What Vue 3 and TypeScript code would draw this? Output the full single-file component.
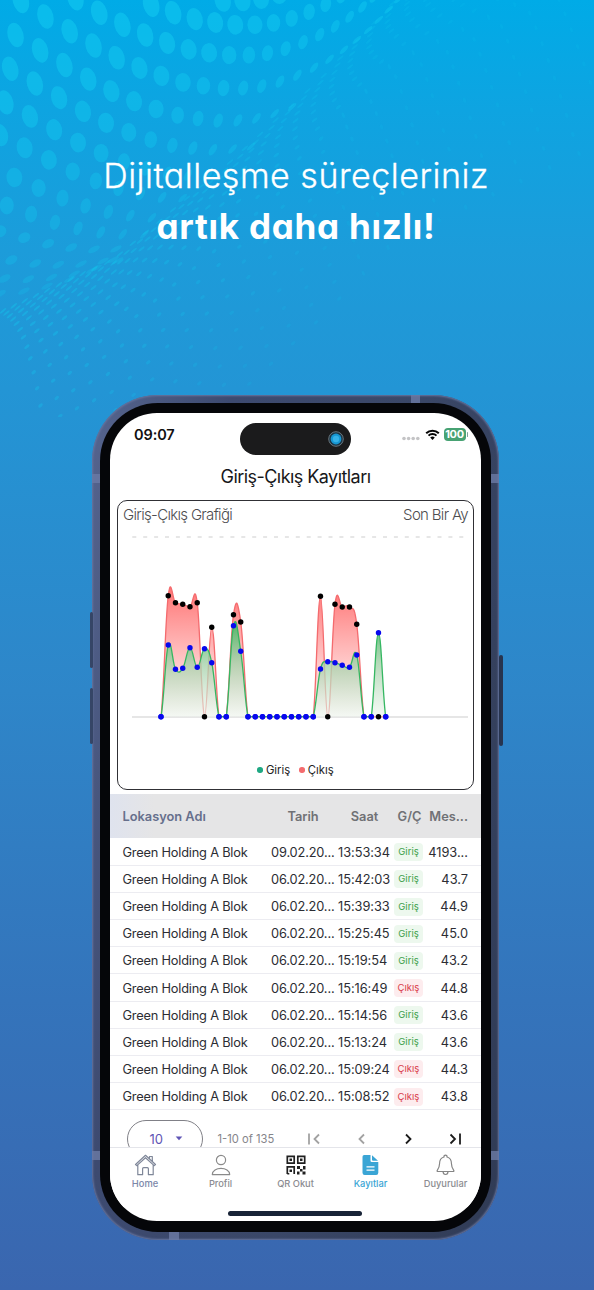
<script setup lang="ts">
interface Dot { x: number; y: number; rx: number; ry: number; a: number; o: number }
interface Row { date: string; time: string; type: 'Giriş' | 'Çıkış'; value: string }

const foldPoints: [number, number][] = [[-60, 845], [0, 820], [300, 680], [600, 430], [850, 200], [1040, 0], [1568, -250], [1700, -300]]
function foldY(x: number): number {
  for (let i = 1; i < foldPoints.length; i++) {
    const [x0, y0] = foldPoints[i - 1]
    const [x1, y1] = foldPoints[i]
    if (x <= x1) return y0 + ((y1 - y0) * (x - x0)) / (x1 - x0)
  }
  return -300
}

const stepX = [65, 64, 63, 61, 60, 58, 57, 54, 53, 52, 49, 48, 46, 44, 41, 38, 34, 30, 28, 26, 26, 26]
const stepY = [41, 39, 38, 32, 27, 21, 17, 9, 6, 0, -5, -12, -17, -20, -22, -25, -26, -26, -27, -27, -27, -27]
const starts: [number, number, number, number][] = [
  [-3, 588, 2, 9], [-2, 399, 12, 5], [-1, 199, -5, 2], [0, 55, 2, 0], [1, 41, 92, 0], [2, 27, 181, 0], [3, 14, 270, 0],
  [4, 0, 356, 0], [5, 38, 468, 1], [6, 18, 542, 1], [7, 0, 610, 1], [8, 30, 686, 2], [9, 12, 735, 2], [10, 0, 775, 2],
]
const dots: Dot[] = []
for (const [row, sx, sy, col] of starts) {
  let x = sx
  let y = sy
  const bend = row > 0 ? 0.45 * row * row : 0
  for (let c = col; c < 22; c++) {
    const gap = foldY(x) - y
    if (gap < -20) break
    const t = Math.max(0, Math.min(1, gap / 560))
    const flat = row >= 7
    const ry = flat ? 17 : 15 + 18 * t
    const rx = Math.max(3, Math.min(21, 5 + gap * 0.05))
    dots.push({ x, y, rx, ry, a: flat ? 62 : -15 + 62 * (1 - t) ** 2.2, o: Math.max(0.2, 0.42 + 0.14 * t - y / 3800) })
    x += stepX[c]
    y += Math.max(-29, stepY[c] - bend)
  }
}
const offsets = [4, 14, 25, 38, 54, 74, 98, 128, 163, 204, 250, 300, 352, 406, 462, 520, 578, 636]
offsets.forEach((off, k) => {
  for (let x = 8 + k * 9; x < 1568;) {
    const y = foldY(x) + off
    const near = Math.max(0, 1 - off / 200)
    if (y > -5 && y < 1100) {
      dots.push({ x, y, rx: 2.6 + (1 - near) * 1.6, ry: 7 + near * 4, a: x > 900 && near < 0.3 ? -20 : 50, o: Math.max(0.13, 0.38 - x / 5200 - off / 4500) })
    }
    x += (40 + x * 0.026) * (1 - near * 0.3)
  }
})

const base = 216.7
const x0 = 43
const pitch = 7.25
function series(values: Record<number, number>): number[] {
  return Array.from({ length: 32 }, (_, i) => (values[i] === undefined ? base : values[i] - 500))
}
const giris = series({ 1: 645, 2: 669.3, 3: 668.3, 4: 647.7, 5: 667.3, 6: 648.7, 7: 662.7, 10: 625.7, 11: 651.3, 22: 669, 23: 661.7, 24: 662.7, 25: 665.3, 26: 667.3, 27: 655, 30: 632.7 })
const cikis = series({ 1: 595.7, 2: 602.7, 3: 604.3, 4: 606.7, 5: 602.7, 7: 627.3, 10: 614.7, 11: 622, 22: 596.3, 24: 604.3, 25: 607, 26: 607, 27: 624.3 })
const px = (i: number): number => x0 + i * pitch
function curve(v: number[]): string {
  const at = (i: number): number => v[Math.max(0, Math.min(v.length - 1, i))]
  let d = `M${px(0)} ${v[0]}`
  for (let i = 0; i < v.length - 1; i++) {
    const c1 = Math.min(base, at(i) + (at(i + 1) - at(i - 1)) * 0.2)
    const c2 = Math.min(base, at(i + 1) - (at(i + 2) - at(i)) * 0.2)
    d += ` C${px(i) + 2.9} ${c1} ${px(i + 1) - 2.9} ${c2} ${px(i + 1)} ${at(i + 1)}`
  }
  return d
}
const girisPath = curve(giris)
const cikisPath = curve(cikis)

const raw: [string, string, string][] = [
  ['13:53:34', 'G', '4193...'], ['15:42:03', 'G', '43.7'], ['15:39:33', 'G', '44.9'], ['15:25:45', 'G', '45.0'], ['15:19:54', 'G', '43.2'],
  ['15:16:49', 'C', '44.8'], ['15:14:56', 'G', '43.6'], ['15:13:24', 'G', '43.6'], ['15:09:24', 'C', '44.3'], ['15:08:52', 'C', '43.8'],
]
const rows: Row[] = raw.map(([time, t, value], i) => ({ date: i === 0 ? '09.02.20...' : '06.02.20...', time, type: t === 'G' ? 'Giriş' : 'Çıkış', value }))
</script>

<template>
  <main class="poster">
    <svg class="dots" viewBox="0 0 1568 1100" width="594" height="417" aria-hidden="true">
      <ellipse v-for="(d, i) in dots" :key="i" cx="0" cy="0" :rx="d.rx" :ry="d.ry" :opacity="d.o" :transform="`translate(${d.x} ${d.y}) rotate(${d.a})`" fill="#13cbf0" />
    </svg>
    <header class="headline">
      <p class="line light">Dijitalleşme süreçleriniz</p>
      <p class="line bold">artık daha hızlı!</p>
    </header>

    <section class="phone">
      <i class="key k1"></i><i class="key k2"></i><i class="key k3"></i>
      <i class="band b1"></i><i class="band b2"></i><i class="band b3"></i><i class="band b4"></i><i class="band b5"></i><i class="band b6"></i>
      <div class="bezel">
        <div class="screen">
          <div class="island"><svg width="16" height="16" viewBox="0 0 16 16"><circle cx="8" cy="8" r="7.3" fill="#1b3444" stroke="#7c8990" stroke-width=".8" /><circle cx="8" cy="8" r="5.4" fill="#1696d2" /><circle cx="8" cy="8" r="3.2" fill="#36b2e8" /></svg></div>
          <div class="status">
            <span class="clock">09:07</span>
            <span class="signs">
              <svg width="18" height="5" viewBox="0 0 18 5"><g fill="#c4c4c6"><circle cx="2" cy="2.5" r="1.8" /><circle cx="6.6" cy="2.5" r="1.8" /><circle cx="11.2" cy="2.5" r="1.8" /><circle cx="15.8" cy="2.5" r="1.8" /></g></svg>
              <svg class="wifi" width="15" height="11" viewBox="0 0 15 11"><path d="M1.2 4.2a9 9 0 0 1 12.6 0M3.5 6.6a5.8 5.8 0 0 1 8 0" fill="none" stroke="#050505" stroke-width="2" /><path d="M5.2 8.6a3.4 3.4 0 0 1 4.6 0L7.5 11z" fill="#050505" /></svg>
              <span class="battery">100</span><i class="tip"></i>
            </span>
          </div>
          <h1 class="title">Giriş-Çıkış Kayıtları</h1>

          <div class="card">
            <div class="cardhead"><span>Giriş-Çıkış Grafiği</span><span>Son Bir Ay</span></div>
            <svg class="chart" width="354" height="240" viewBox="0 22 354 240">
              <defs>
                <linearGradient id="red" x1="0" y1="0" x2="0" y2="1"><stop offset="0" stop-color="#ff6c6c" stop-opacity=".95" /><stop offset="1" stop-color="#ff8080" stop-opacity=".02" /></linearGradient>
                <linearGradient id="green" x1="0" y1="0" x2="0" y2="1"><stop offset="0" stop-color="#48b765" stop-opacity=".95" /><stop offset=".45" stop-color="#a6d2ab" stop-opacity=".8" /><stop offset="1" stop-color="#edf5ed" stop-opacity=".6" /></linearGradient>
              </defs>
              <path d="M14.3 37H346" stroke="#dedede" stroke-width="1.5" stroke-dasharray="4 6.9" />
              <path d="M14 217H350" stroke="#dedede" stroke-width="1.3" />
              <path :d="cikisPath + 'Z'" fill="url(#red)" /><path :d="cikisPath" fill="none" stroke="#f46b6e" stroke-width="1.3" />
              <path :d="girisPath + 'Z'" fill="url(#green)" /><path :d="girisPath" fill="none" stroke="#35b762" stroke-width="1.3" />
              <circle v-for="(y, i) in cikis" :key="'c' + i" :cx="px(i)" :cy="y" r="2.7" :fill="y === base && giris[i] === base ? '#0808ee' : '#000'" />
              <circle v-for="(y, i) in giris" :key="'g' + i" :cx="px(i)" :cy="y" r="2.7" fill="#0808ee" />
            </svg>
            <div class="legend"><i class="g"></i><span>Giriş</span><i class="r"></i><span>Çıkış</span></div>
          </div>

          <div class="grid head"><span>Lokasyon Adı</span><span class="c">Tarih</span><span class="c">Saat</span><span class="c gc">G/Ç</span><span class="e">Mes...</span></div>
          <div class="list">
            <div v-for="r in rows" :key="r.time" class="grid row">
              <span class="name">Green Holding A Blok</span><span class="date">{{ r.date }}</span><span class="time">{{ r.time }}</span>
              <span class="badge" :class="{ out: r.type === 'Çıkış' }">{{ r.type }}</span><span class="e">{{ r.value }}</span>
            </div>
          </div>

          <div class="pager">
            <div class="size"><span>10</span><svg width="8" height="5" viewBox="0 0 8 5"><path d="M.7.6h6.6L4 4.2z" fill="#5f55b5" /></svg></div>
            <span class="range">1-10 of 135</span>
            <svg class="arrows" width="158" height="14" viewBox="0 0 158 14" fill="none" stroke-width="1.8"><path d="M2 1.5v11M12 2.5L7.5 7l4.500 4.500M57 2.500L52.500 7l4.500 4.500" stroke="#a2a2a2" /><path d="M99 2.500l4.500 4.500-4.500 4.500M143.500 2.500L148 7l-4.500 4.500M153 1.500v11" stroke="#1c1c1c" /></svg>
          </div>

          <nav class="tabs">
            <div class="tab home"><svg width="23" height="22" viewBox="0 0 23 22" fill="none" stroke="#7f8799" stroke-width="1.2" stroke-linejoin="round" stroke-linecap="round"><path d="M1.500 10.500L11.500 1.300l10 9.200-1.300 1.100-8.700-7.900-8.700 7.900zM3.800 11v9.700h4.800v-6q0-1 1-1h3.800q1 0 1 1v6h4.800V11M15.500 4.700V2.500h2.800v4.800" /></svg><span>Home</span></div>
            <div class="tab"><svg width="20" height="22" viewBox="0 0 20 22" fill="none" stroke="#8a8a8a" stroke-width="1.200"><circle cx="10" cy="6" r="4.600" /><path d="M1.300 20.600c0-8.300 17.400-8.300 17.400 0z" stroke-linejoin="round" /></svg><span>Profil</span></div>
            <div class="tab qr"><svg width="20" height="20" viewBox="0 0 20 20"><g fill="none" stroke="#202020" stroke-width="1.700"><path d="M1.300 1.300h6.900v6.900H1.300zM11.800 1.300h6.900v6.900h-6.900zM8.200 19v-7.200H1.300V19" /></g><path fill="#202020" d="M3.500 3.500h2.500V6H3.500zM14 3.500h2.500V6H14zM3.500 14.500H6V17H3.500zM1.300 18h2v1.500h-2zM11 11h3v3h-3zM14 14h2.500v2.500H14zM17 11h2.500v3.500H17zM11 16.500h2.500v3H11zM16.500 16.500h3v3h-3z" /></svg><span>QR Okut</span></div>
            <div class="tab active"><svg width="17" height="21" viewBox="0 0 17 21"><path d="M2.200.5h6.300v5.800q0 1.300 1.300 1.300h6.500v10.700q0 2.200-2.200 2.200H2.700Q.5 20.500.5 18.300V2.200Q.5.500 2.200.500zM10 .8l6 5.400h-5q-1 0-1-1z" fill="#3aa5d5" /><path d="M4.500 12.300h8M4.500 15.700h8" stroke="#fff" stroke-width="1.200" /></svg><span>Kayıtlar</span></div>
            <div class="tab"><svg width="19" height="22" viewBox="0 0 19 22" fill="none" stroke="#858585" stroke-width="1.200" stroke-linejoin="round"><path d="M8 3V2q1.500-1.600 3 0v1c3.600.9 4.500 3.700 4.500 7 0 3.300 1 4.600 2.200 6.300.5.700.2 1.200-.6 1.200H1.900c-.8 0-1.100-.5-.6-1.200C2.500 14.600 3.500 13.300 3.500 10c0-3.300.9-6.100 4.500-7zM7 17.500c.2 4 5 4 5 0" /></svg><span>Duyurular</span></div>
          </nav>
          <i class="homebar"></i>
        </div>
      </div>
    </section>
  </main>
</template>

<style>
body { margin: 0; }
</style>

<style scoped>
* { box-sizing: border-box; }
.poster { position: relative; width: 594px; height: 1290px; overflow: hidden; font-family: Inter, "Liberation Sans", sans-serif; background: linear-gradient(#00abe7 0, #0ea4e1 110px, #1c9cda 250px, #2395d5 390px, #2e86c9 690px, #3474bb 1000px, #3a66af 1290px); }
.dots { position: absolute; left: 0; top: 0; }
.headline { position: absolute; left: 0; right: 2px; top: 150px; text-align: center; color: #fff; }
.line { margin: 0; height: 51px; line-height: 51px; white-space: nowrap; font-feature-settings: "cv11"; }
.light { font-size: 34px; font-weight: 300; letter-spacing: .5px; -webkit-text-stroke: .3px #fff; }
.bold { font-size: 35px; font-weight: 700; letter-spacing: .75px; }
.phone { position: absolute; left: 92px; top: 395px; width: 407px; height: 845px; padding: 8px 8px; border-radius: 66px; background: linear-gradient(100deg, #56658f 0, #3d4a70 25%, #3a4767 60%, #303b55 100%); box-shadow: inset 0 0 2px 1px #6675a0; }
.bezel { height: 829px; padding: 10px 10px 11px 10px; border-radius: 58px; background: #050609; }
.screen { position: relative; height: 808px; width: 371px; border-radius: 47px; background: #fff; overflow: hidden; display: flex; flex-direction: column; color: #2c2d33; }
.key { position: absolute; background: #354566; border-radius: 2px; width: 3px; }
.k1 { left: -2px; top: 217px; height: 56px; }
.k2 { left: -2px; top: 293px; height: 56px; }
.k3 { left: 407px; top: 260px; height: 91px; width: 4px; background: #27344f; }
.band { position: absolute; background: #6c7ba5; width: 8px; height: 9px; opacity: .8; }
.b1 { left: 0; top: 79px; }
.b2 { left: 399px; top: 79px; }
.b3 { left: 319px; top: 0; width: 9px; height: 8px; }
.b4 { left: 0; top: 756px; }
.b5 { left: 399px; top: 756px; }
.b6 { left: 77px; top: 837px; width: 10px; height: 8px; }
.island { position: absolute; left: 130px; top: 10px; width: 111px; height: 32px; border-radius: 16px; background: #1b1b1c; display: flex; align-items: center; justify-content: flex-end; padding-right: 7px; }
.status { height: 43px; flex: none; display: flex; justify-content: space-between; padding: 0 13px 0 24px; }
.clock { font-size: 14.500px; font-weight: 600; line-height: 44px; letter-spacing: -.1px; color: #111; }
.signs { display: flex; align-items: center; }
.signs > svg:first-child { margin-top: 7px; }
.wifi { margin: 0 4px 0 5px; }
.battery { width: 22px; height: 13px; line-height: 13px; border-radius: 4px; background: #47a273; color: #fff; font-size: 11px; font-weight: 700; text-align: center; letter-spacing: -.3px; }
.tip { width: 1.500px; height: 5px; margin-left: 1px; border-radius: 1px; background: #7fa399; }
.title { margin: 0; height: 44px; flex: none; line-height: 41px; text-align: center; font-size: 18px; font-weight: 400; letter-spacing: -.55px; color: #17171a; }
.card { flex: none; width: 357px; height: 289.500px; margin-left: 7px; border: 1px solid #303035; border-radius: 10px; }
.cardhead { height: 21px; display: flex; justify-content: space-between; padding: 0 5px; font-size: 15px; line-height: 27px; font-weight: 300; letter-spacing: -.68px; color: #4d4d50; }
.chart { display: block; }
.legend { height: 14px; margin-top: 1px; display: flex; justify-content: center; align-items: center; font-size: 11.300px; color: #222; }
.legend i { width: 5.500px; height: 5.500px; border-radius: 50%; }
.legend span { margin: 0 9px 0 3px; }
.legend span:last-child { margin-right: 0; }
.g { background: #1fa883; }
.r { background: #f46b6e; }
.grid { flex: none; display: grid; grid-template-columns: 148.500px 64px 59px 29px 1fr; padding: 0 13px 0 12.500px; align-items: center; font-size: 12.800px; white-space: nowrap; }
.head { height: 44px; margin-top: 4.500px; background: linear-gradient(90deg, #dfe3ee, #e5e5e6 12%); color: #707175; font-weight: 600; }
.head span:first-child { color: #666f8c; }
.c { text-align: center; }
.gc { padding-left: 2px; }
.e { text-align: right; }
.list { flex: none; }
.row { height: 27.150px; border-bottom: 1px solid #ececf1; padding-top: 1px; }
.row:first-child { height: 27.900px; padding-top: 1.500px; }
.name { letter-spacing: -.2px; }
.date { letter-spacing: -.15px; }
.time { padding-left: 3px; letter-spacing: -.05px; }
.badge { height: 18px; line-height: 18px; border-radius: 4px; background: #edf8ee; color: #40a04b; font-size: 9.500px; text-align: center; }
.out { background: #fdecee; color: #d93b49; }
.pager { height: 37.250px; flex: none; display: flex; overflow: hidden; padding: 9.500px 0 0 16.500px; }
.size { flex: none; width: 76px; height: 38px; border: 1px solid #808087; border-radius: 19px; display: flex; align-items: center; gap: 12px; padding-left: 22px; font-size: 13px; color: #5f55b5; }
.range { margin-left: 15px; width: 89px; line-height: 38px; font-size: 11.200px; color: #85858a; }
.arrows { margin-top: 12px; }
.tabs { flex: none; height: 60px; border-top: 1px solid #e4e5ea; display: flex; background: #fff; }
.tab { width: 75px; flex: none; display: flex; flex-direction: column; align-items: center; padding-top: 6px; font-size: 9.300px; font-weight: 500; color: #8c8c91; }
.tab:first-child { width: 73px; padding-right: 3px; }
.tab svg { height: 22px; }
.tab span { line-height: 14px; margin-top: 1px; }
.qr svg { margin-left: 1px; }
.home { color: #7b86a8; }
.active { color: #3aa5d5; }
.homebar { position: absolute; left: 118px; top: 798px; width: 134px; height: 4.500px; border-radius: 3px; background: #182337; }
</style>
